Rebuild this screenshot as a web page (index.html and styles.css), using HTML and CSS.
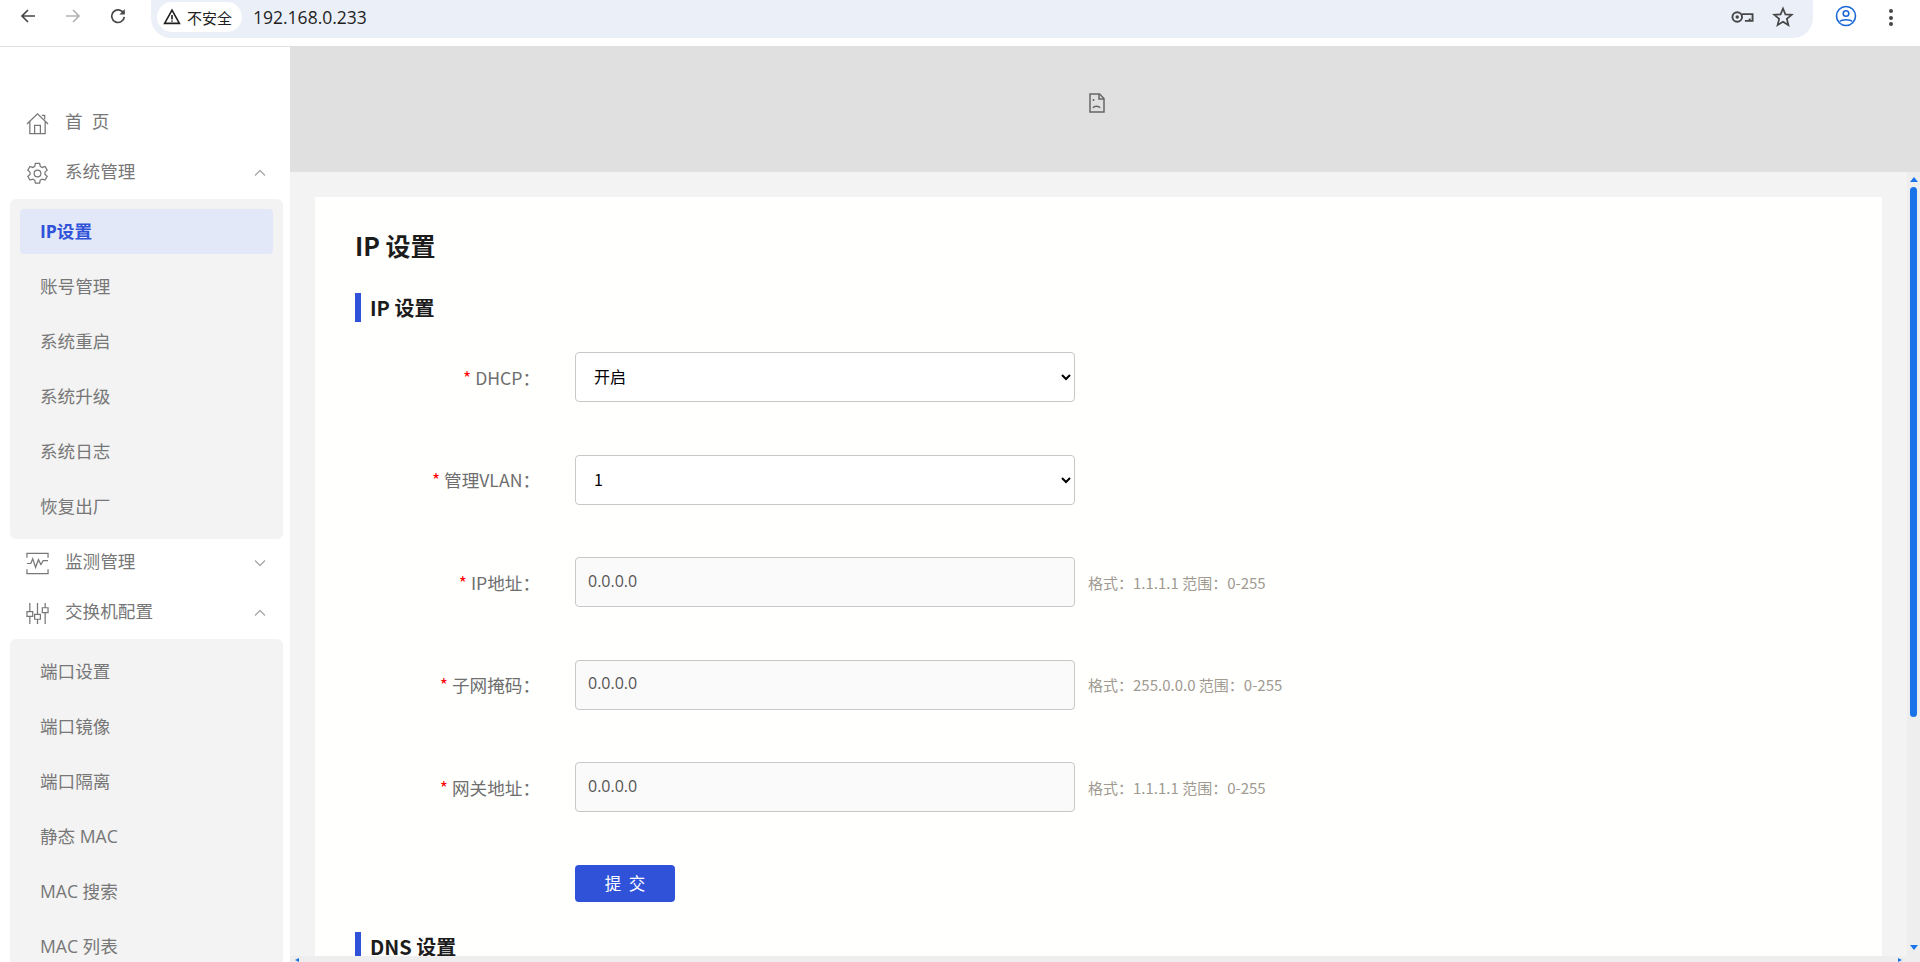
FILE: index.html
```html
<!DOCTYPE html>
<html lang="zh-CN">
  <head>
    <meta charset="UTF-8" />
    <meta name="viewport" content="width=device-width, initial-scale=1.0" />
    <title>IP 设置</title>
    <link rel="stylesheet" href="styles.css">
  </head>

  <body>
    <!-- Browser bar -->
    <header class="browser">
      <div class="nav">
        <svg class="nav_icon" viewBox="0 0 16 16"><path d="M15 8H2.5M8 2 2 8l6 6" /></svg>
        <svg class="nav_icon nav_off" viewBox="0 0 16 16"><path d="M1 8h12.5M8 2l6 6-6 6" /></svg>
        <svg class="nav_icon" viewBox="0 0 16 16"><path d="M13.6 5.2A6.3 6.3 0 1 0 14.3 8.8" /><path class="nav_fill" d="M14.8 1v5.4H9.4z" /></svg>
      </div>
      <div class="omnibox">
        <div class="secure">
          <svg class="warn" viewBox="0 0 18 18"><path d="M9 2.2 1.6 15.4h14.8z" /><path d="M9 7v4.4M9 12.4v1.4" /></svg>
          <span>不安全</span>
        </div>
        <span class="url">192.168.0.233</span>
        <svg class="key" viewBox="0 0 24 14"><circle cx="6.5" cy="7" r="5" /><circle class="solid" cx="6.5" cy="7" r="1.8" /><path d="M11.5 4h11v7h-8M19.500 11V8.500" /></svg>
        <svg class="star" viewBox="0 0 20 20"><path d="m10 2.300 2.200 5.300 5.700.4-4.400 3.700 1.400 5.600L10 14.300l-4.900 3 1.400-5.600L2.100 8l5.700-.4z" /></svg>
      </div>
      <svg class="profile" viewBox="0 0 22 22"><circle cx="11" cy="11" r="9.500" /><circle cx="11" cy="8.500" r="2.800" /><path d="M4.800 16.500c2-2.400 10.400-2.400 12.400 0" /></svg>
      <div class="dots"><i></i><i></i><i></i></div>
    </header>

    <div class="app">
      <!-- Left menu -->
      <nav class="sidebar">
        <div class="menu">
          <svg class="menu_icon" viewBox="0 0 24 24"><path d="M1 12.500 12 2l11 10.500M4 10v12.500h16V10M9 22.500V14h6v8.500M16.500 3.500h3v4" /></svg>
          <span>首&nbsp;&nbsp;页</span>
        </div>
        <div class="menu">
          <svg class="menu_icon" viewBox="0 0 24 24"><circle cx="12" cy="12" r="3.500" /><path d="M9.800 1.500h4.400l.7 3.100 2 1.100 3-1 2.200 3.800-2.300 2.100v2.300l2.300 2.100-2.200 3.800-3-1-2 1.100-.7 3.100H9.800l-.7-3.100-2-1.100-3 1-2.200-3.800 2.300-2.100v-2.300L1.900 8.500l2.200-3.800 3 1 2-1.100z" /></svg>
          <span>系统管理</span>
          <svg class="chevron" viewBox="0 0 12 8"><path d="m1 6.500 5-5 5 5" /></svg>
        </div>
        <div class="panel">
          <div class="item item_active">IP设置</div>
          <div class="item">账号管理</div>
          <div class="item">系统重启</div>
          <div class="item">系统升级</div>
          <div class="item">系统日志</div>
          <div class="item">恢复出厂</div>
        </div>
        <div class="menu">
          <svg class="menu_icon" viewBox="0 0 24 24"><path d="M1 6V1.500h22V6M1 18v4.500h22V18M1 12h4l2-5 3 9 3-8 2.500 5 2.500-4h5" /></svg>
          <span>监测管理</span>
          <svg class="chevron" viewBox="0 0 12 8"><path d="m1 1.500 5 5 5-5" /></svg>
        </div>
        <div class="menu">
          <svg class="menu_icon" viewBox="0 0 24 24"><path d="M4 1v9M4 15v8M12 1v12M12 18v5M20 1v5M20 11v12M1 10h6v5H1zM9 13h6v5H9zM17 6h6v5h-6z" /></svg>
          <span>交换机配置</span>
          <svg class="chevron" viewBox="0 0 12 8"><path d="m1 6.500 5-5 5 5" /></svg>
        </div>
        <div class="panel">
          <div class="item">端口设置</div>
          <div class="item">端口镜像</div>
          <div class="item">端口隔离</div>
          <div class="item">静态 MAC</div>
          <div class="item">MAC 搜索</div>
          <div class="item">MAC 列表</div>
        </div>
      </nav>

      <main class="main">
        <div class="banner">
          <svg class="broken" viewBox="0 0 16 20"><path d="M1 1h9.500L15 5.500V19H1z" /><path d="M10 1v5h5" /><path d="M4.500 6v2M4 15c1-2.400 6-2.400 7 0" /></svg>
        </div>

        <div class="workspace">
          <section class="card">
            <h1 class="title">IP 设置</h1>
            <h2 class="section">IP 设置</h2>

            <form class="form">
              <div class="row">
                <label class="label"><em>*</em> DHCP：</label>
                <select class="field field_select">
                  <option>开启</option>
                  <option>关闭</option>
                </select>
              </div>
              <div class="row">
                <label class="label"><em>*</em> 管理VLAN：</label>
                <select class="field field_select">
                  <option>1</option>
                  <option>2</option>
                </select>
              </div>
              <div class="row">
                <label class="label"><em>*</em> IP地址：</label>
                <input class="field field_input" type="text" value="0.0.0.0" />
                <span class="hint">格式：1.1.1.1 范围：0-255</span>
              </div>
              <div class="row">
                <label class="label"><em>*</em> 子网掩码：</label>
                <input class="field field_input" type="text" value="0.0.0.0" />
                <span class="hint">格式：255.0.0.0 范围：0-255</span>
              </div>
              <div class="row">
                <label class="label"><em>*</em> 网关地址：</label>
                <input class="field field_input" type="text" value="0.0.0.0" />
                <span class="hint">格式：1.1.1.1 范围：0-255</span>
              </div>
              <button class="submit" type="button">提&nbsp;&nbsp;交</button>
            </form>

            <h2 class="section section_next">DNS 设置</h2>
          </section>

          <div class="vscroll">
            <i class="arrow arrow_up"></i>
            <i class="thumb"></i>
            <i class="arrow arrow_down"></i>
          </div>
        </div>

        <div class="hscroll">
          <i class="arrow arrow_left"></i>
          <i class="arrow arrow_right"></i>
        </div>
      </main>
    </div>
  </body>
</html>
```

FILE: styles.css
```css
* {
  box-sizing: border-box;
}

html,
body {
  height: 100%;
}

body {
  margin: 0;
  display: flex;
  flex-direction: column;
  overflow: hidden;
  background: #fff;
  font-family: "Noto Sans CJK SC", "Noto Sans", sans-serif;
}

svg {
  flex: none;
  fill: none;
}

/* Browser bar */
.browser {
  display: flex;
  align-items: flex-start;
  flex: none;
  height: 47px;
  border-bottom: 1px solid #e3e3e3;
}

.nav {
  display: flex;
  gap: 29px;
  width: 151px;
  padding: 8px 0 0 20px;
}

.nav_icon {
  width: 16px;
  height: 16px;
  stroke: #474747;
  stroke-width: 1.7;
}

.nav_off {
  stroke: #b2b2b2;
}

.nav_fill {
  fill: #474747;
  stroke: none;
}

.omnibox {
  display: flex;
  align-items: center;
  width: 1662px;
  height: 38px;
  padding: 0 0 4px 6px;
  background: #ebf0f8;
  border-radius: 0 0 20px 20px;
}

.secure {
  display: flex;
  align-items: center;
  gap: 6px;
  width: 85px;
  height: 30px;
  padding-left: 6px;
  background: #fff;
  border-radius: 15px;
  font-size: 15px;
  color: #1f1f1f;
}

.warn {
  width: 18px;
  height: 18px;
  stroke: #1f1f1f;
  stroke-width: 1.600;
}

.url {
  flex: 1;
  margin-left: 11px;
  font-family: "Open Sans", sans-serif;
  font-size: 17.500px;
  color: #1f1f1f;
}

.key {
  width: 23px;
  height: 14px;
  margin-right: 18px;
  stroke: #474747;
  stroke-width: 2;
}

.key .solid {
  fill: #474747;
  stroke: none;
}

.star {
  width: 22px;
  height: 22px;
  margin-right: 19px;
  stroke: #474747;
  stroke-width: 1.600;
}

.profile {
  width: 22px;
  height: 22px;
  margin: 5px 0 0 22px;
  stroke: #1a68d6;
  stroke-width: 1.600;
}

.dots {
  display: flex;
  flex-direction: column;
  gap: 2.500px;
  margin: 9px 0 0 32px;
}

.dots i {
  width: 4px;
  height: 4px;
  border-radius: 50%;
  background: #474747;
}

/* Page */
.app {
  display: flex;
  flex: 1;
  min-height: 0;
}

.sidebar {
  flex: none;
  width: 290px;
  padding-top: 51px;
  overflow: hidden;
  background: #fff;
  font-family: "Open Sans", "Noto Sans CJK SC", sans-serif;
}

.menu {
  display: flex;
  align-items: center;
  height: 50px;
  padding-left: 26px;
  font-size: 17.600px;
  color: #777;
}

.menu span {
  margin-bottom: 5px;
}

.menu_icon {
  width: 23px;
  height: 23px;
  margin-right: 16px;
  stroke: #777;
  stroke-width: 1.300;
}

.chevron {
  width: 12px;
  height: 8px;
  margin: 0 24px 1px auto;
  stroke: #a8a8a8;
  stroke-width: 1.300;
}

.panel {
  display: flex;
  flex-direction: column;
  gap: 10px;
  margin: 1px 7px -1px 10px;
  padding: 10px;
  background: #f3f3f3;
  border-radius: 6px;
}

.item {
  flex: none;
  height: 45px;
  padding-left: 20px;
  line-height: 44px;
  font-size: 17.600px;
  color: #777;
  border-radius: 4px;
}

.item_active {
  background: #e2e8f7;
  color: #3052d9;
  font-weight: 700;
}

.main {
  display: flex;
  flex-direction: column;
  flex: 1;
  min-width: 0;
  margin-top: -1px;
  background: #f3f3f3;
}

.banner {
  display: flex;
  align-items: center;
  justify-content: center;
  flex: none;
  height: 126px;
  padding: 0 16px 12px 0;
  background: #e0e0e0;
}

.broken {
  width: 16px;
  height: 20px;
  stroke: #666;
  stroke-width: 1.500;
}

.workspace {
  display: flex;
  flex: 1;
  min-height: 0;
  padding: 25px 0 0 25px;
}

.card {
  flex: 1;
  min-width: 0;
  margin-right: 25px;
  padding: 31px 40px 0;
  overflow: hidden;
  background: #fffffe;
}

.title {
  margin: 0 0 31px;
  height: 34px;
  font-size: 25px;
  line-height: 34px;
  font-weight: 700;
  color: #1c1c1c;
}

.section {
  margin: 0;
  height: 29px;
  padding-left: 9px;
  border-left: 6px solid #3052d9;
  font-size: 20px;
  line-height: 29px;
  font-weight: 700;
  color: #1c1c1c;
}

.section_next {
  margin-top: 30px;
}

/* Form */
.form {
  display: flex;
  flex-direction: column;
  align-items: flex-start;
  gap: 52.500px;
  margin-top: 30px;
}

.row {
  display: flex;
  align-items: center;
  height: 50px;
}

.label {
  width: 185px;
  margin-right: 35px;
  text-align: right;
  font-size: 17.600px;
  color: #6e6e6e;
}

.label em {
  font-style: normal;
  color: #f00;
}

.field {
  width: 500px;
  height: 50px;
  border: 1px solid #c8c8c8;
  border-radius: 4px;
  font-family: "Noto Sans CJK SC", sans-serif;
  font-size: 16px;
  outline: none;
}

.field_select {
  padding: 0 0 2px 14px;
  background: #fff;
  color: #000;
}

.field_input {
  padding: 0 12px 3px;
  background: #fafafa;
  color: #555;
  font-family: "Open Sans", sans-serif;
}

.hint {
  margin-left: 13px;
  font-size: 15px;
  color: #a09a90;
}

.submit {
  width: 100px;
  height: 37px;
  margin-left: 220px;
  border: 0;
  border-radius: 4px;
  background: #3052d9;
  color: #fff;
  font-family: "Noto Sans CJK SC", sans-serif;
  font-size: 16.500px;
}

/* Scrollbars */
.vscroll {
  display: flex;
  flex-direction: column;
  align-items: center;
  flex: none;
  width: 13px;
  margin-top: -25px;
  padding: 5px 0 6px;
  background: #eee;
}

.thumb {
  width: 7px;
  height: 530px;
  margin-top: 5px;
  border-radius: 4px;
  background: #1a73e8;
}

.arrow {
  display: block;
  width: 0;
  height: 0;
  border-style: solid;
  border-color: transparent;
}

.arrow_up {
  border-width: 0 4.500px 5px;
  border-bottom-color: #1a73e8;
}

.arrow_down {
  margin-top: auto;
  border-width: 5px 4.500px 0;
  border-top-color: #1a73e8;
}

.hscroll {
  display: flex;
  align-items: flex-end;
  justify-content: space-between;
  flex: none;
  height: 6px;
  padding: 0 18px 0 5px;
  background: #eee;
}

.arrow_left {
  border-width: 2.500px 4px 2.500px 0;
  border-right-color: #1a73e8;
}

.arrow_right {
  border-width: 2.500px 0 2.500px 4px;
  border-left-color: #1a73e8;
}
```
